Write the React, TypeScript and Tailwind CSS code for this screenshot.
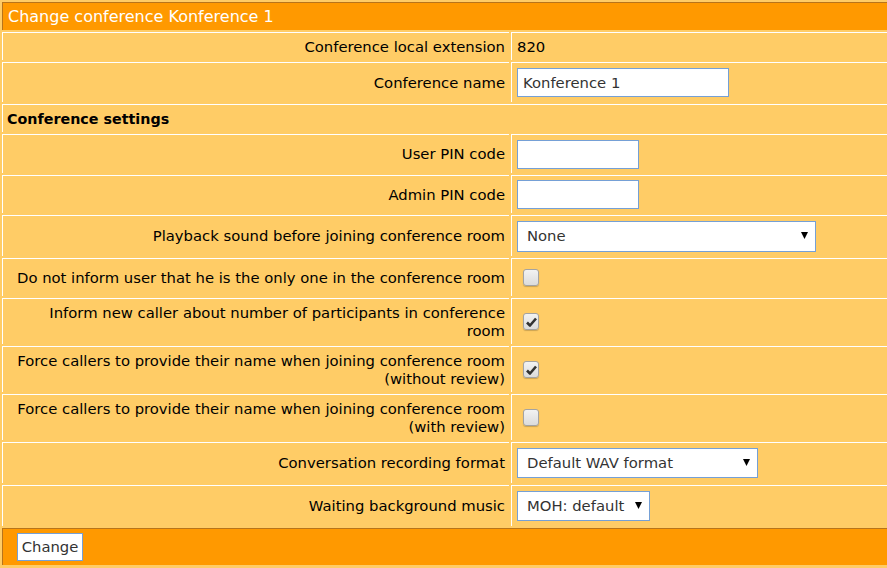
import type { ReactNode } from "react"

type Row =
  | { kind: "text"; id: string; label: ReactNode; value: string; h: string }
  | { kind: "input"; id: string; label: ReactNode; value: string; width: string; h: string }
  | { kind: "select"; id: string; label: ReactNode; value: string; width: string; selH: string; h: string }
  | { kind: "check"; id: string; label: ReactNode; checked: boolean; h: string }

const topRows: Row[] = [
  { kind: "text", id: "ext", label: "Conference local extension", value: "820", h: "h-[28px]" },
  { kind: "input", id: "name", label: "Conference name", value: "Konference 1", width: "w-[212px]", h: "h-[40px]" },
]

const settingRows: Row[] = [
  { kind: "input", id: "upin", label: "User PIN code", value: "", width: "w-[122px]", h: "h-[39px]" },
  { kind: "input", id: "apin", label: "Admin PIN code", value: "", width: "w-[122px]", h: "h-[38px]" },
  {
    kind: "select",
    id: "play",
    label: "Playback sound before joining conference room",
    value: "None",
    width: "w-[299px]",
    selH: "h-[31px]",
    h: "h-[41px]",
  },
  {
    kind: "check",
    id: "only",
    label: "Do not inform user that he is the only one in the conference room",
    checked: false,
    h: "h-[38px]",
  },
  {
    kind: "check",
    id: "count",
    label: (
      <>
        Inform new caller about number of participants in conference
        <br />
        room
      </>
    ),
    checked: true,
    h: "h-[46px]",
  },
  {
    kind: "check",
    id: "noreview",
    label: (
      <>
        Force callers to provide their name when joining conference room
        <br />
        (without review)
      </>
    ),
    checked: true,
    h: "h-[46px]",
  },
  {
    kind: "check",
    id: "review",
    label: (
      <>
        Force callers to provide their name when joining conference room
        <br />
        (with review)
      </>
    ),
    checked: false,
    h: "h-[46px]",
  },
  {
    kind: "select",
    id: "rec",
    label: "Conversation recording format",
    value: "Default WAV format",
    width: "w-[241px]",
    selH: "h-[30px]",
    h: "h-[41px]",
  },
  {
    kind: "select",
    id: "moh",
    label: "Waiting background music",
    value: "MOH: default",
    width: "w-[133px]",
    selH: "h-[30px]",
    h: "h-[41px]",
  },
]

function Checkbox({ checked }: { checked: boolean }) {
  return (
    <span className="ml-[6px] flex h-[17px] w-[16px] items-center justify-center rounded-[3px] border border-[#a3a3a3] bg-gradient-to-b from-[#f2f2f2] to-[#dcdcdc] shadow-[0_1px_1px_rgba(0,0,0,0.2)]">
      {checked && (
        <svg width="11" height="10" viewBox="0 0 11 10">
          <path d="M1 5.5 L4 8.5 L10 1.5" fill="none" stroke="#333" strokeWidth="2.6" strokeLinejoin="round" />
        </svg>
      )}
    </span>
  )
}

function Value({ row }: { row: Row }) {
  switch (row.kind) {
    case "text":
      return <span>{row.value}</span>
    case "input":
      return (
        <input
          readOnly
          value={row.value}
          className={`${row.width} h-[29px] border border-[#75a0d6] bg-white px-[5px] text-[14.8px] text-[#333] outline-none`}
        />
      )
    case "select":
      return (
        <div className={`relative ${row.width} ${row.selH}`}>
          <select
            className="h-full w-full appearance-none border border-[#75a0d6] bg-white pl-[9px] text-[14.8px] text-[#333] outline-none"
            defaultValue={row.value}
          >
            <option>{row.value}</option>
          </select>
          <svg
            className="pointer-events-none absolute right-[8px] top-1/2 -mt-[4px]"
            width="7"
            height="7"
            viewBox="0 0 7 7"
          >
            <path d="M0 0 H7 L3.5 7 Z" fill="#000" />
          </svg>
        </div>
      )
    case "check":
      return <Checkbox checked={row.checked} />
  }
}

function FormRow({ row }: { row: Row }) {
  return (
    <tr>
      <td className={`${row.h} whitespace-nowrap border-t border-l border-white px-[4px] text-right align-middle`}>
        {row.label}
      </td>
      <td className={`${row.h} border-t border-l border-white pl-[5px] pr-[4px] align-middle`}>
        <div className="flex items-center">
          <Value row={row} />
        </div>
      </td>
    </tr>
  )
}

export default function App() {
  return (
    <div className="h-[568px] w-[887px] overflow-hidden bg-[#ffcc66] font-['DejaVu_Sans',Verdana,sans-serif] text-[14.8px] leading-[18px] text-black">
      <table className="w-[895px] table-fixed border-separate border-spacing-[2px]">
        <colgroup>
          <col className="w-[507px]" />
          <col />
        </colgroup>
        <tbody>
          <tr>
            <td
              colSpan={2}
              className="h-[28px] border-t border-l border-[#b8741a] bg-[#ff9900] px-[5px] text-left text-[16px] font-normal text-white"
            >
              Change conference Konference 1
            </td>
          </tr>
          {topRows.map((row) => (
            <FormRow key={row.id} row={row} />
          ))}
          <tr>
            <td colSpan={2} className="h-[28px] border-t border-l border-white px-[4px] text-[14.3px] font-bold">
              Conference settings
            </td>
          </tr>
          {settingRows.map((row) => (
            <FormRow key={row.id} row={row} />
          ))}
          <tr>
            <td colSpan={2} className="h-[37px] border-t border-l border-[#b8741a] bg-[#ff9900] px-[14px] align-middle">
              <button className="h-[28px] w-[66px] border border-[#75a0d6] bg-white text-[14.8px] text-[#333]">
                Change
              </button>
            </td>
          </tr>
        </tbody>
      </table>
    </div>
  )
}
